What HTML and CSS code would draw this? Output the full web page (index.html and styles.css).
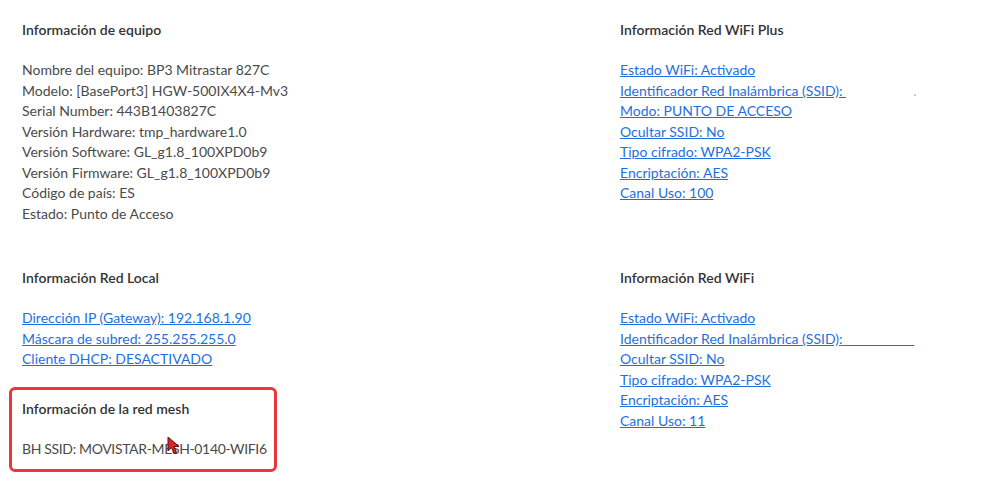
FILE: index.html
```html
<!DOCTYPE html>
<html lang="es">
<head>
<meta charset="utf-8">
<title>Información</title>
<link rel="stylesheet" href="styles.css">
</head>
<body>
<main class="page">
  <section class="section">
    <h2 class="title">Información de equipo</h2>
    <ul class="list">
      <li>Nombre del equipo: BP3 Mitrastar 827C</li>
      <li>Modelo: [BasePort3] HGW-500IX4X4-Mv3</li>
      <li>Serial Number: 443B1403827C</li>
      <li>Versión Hardware: tmp_hardware1.0</li>
      <li>Versión Software: GL_g1.8_100XPD0b9</li>
      <li>Versión Firmware: GL_g1.8_100XPD0b9</li>
      <li>Código de país: ES</li>
      <li>Estado: Punto de Acceso</li>
    </ul>
  </section>
  <section class="section">
    <h2 class="title">Información Red WiFi Plus</h2>
    <ul class="list">
      <li><a href="#">Estado WiFi: Activado</a></li>
      <li><a href="#">Identificador Red Inalámbrica (SSID): </a><span class="gap"></span><span class="dot">.</span></li>
      <li><a href="#">Modo: PUNTO DE ACCESO</a></li>
      <li><a href="#">Ocultar SSID: No</a></li>
      <li><a href="#">Tipo cifrado: WPA2-PSK</a></li>
      <li><a href="#">Encriptación: AES</a></li>
      <li><a href="#">Canal Uso: 100</a></li>
    </ul>
  </section>
  <div class="stack">
    <section class="section">
      <h2 class="title">Información Red Local</h2>
      <ul class="list">
        <li><a href="#">Dirección IP (Gateway): 192.168.1.90</a></li>
        <li><a href="#">Máscara de subred: 255.255.255.0</a></li>
        <li><a href="#">Cliente DHCP: DESACTIVADO</a></li>
      </ul>
    </section>
    <section class="section mesh">
      <h2 class="title">Información de la red mesh</h2>
      <ul class="list">
        <li class="tight">BH SSID: MOVISTAR-MESH-0140-WIFI6</li>
      </ul>
      <svg class="cursor" width="14" height="20" viewBox="0 0 14 20" aria-hidden="true">
        <path d="M1 1 L1 15 L4.5 11.5 L7 17.5 L9.5 16.5 L7 10.5 L12 10.5 Z" fill="#d8252a" stroke="#5a1010" stroke-width="1" stroke-linejoin="round"/>
      </svg>
    </section>
  </div>
  <section class="section">
    <h2 class="title">Información Red WiFi</h2>
    <ul class="list">
      <li><a href="#">Estado WiFi: Activado</a></li>
      <li><a href="#">Identificador Red Inalámbrica (SSID):<span class="blank">&nbsp;&nbsp;&nbsp;&nbsp;&nbsp;&nbsp;&nbsp;&nbsp;&nbsp;&nbsp;&nbsp;&nbsp;&nbsp;&nbsp;&nbsp;&nbsp;&nbsp;&nbsp;&nbsp;&nbsp;</span></a></li>
      <li><a href="#">Ocultar SSID: No</a></li>
      <li><a href="#">Tipo cifrado: WPA2-PSK</a></li>
      <li><a href="#">Encriptación: AES</a></li>
      <li><a href="#">Canal Uso: 11</a></li>
    </ul>
  </section>
</main>
</body>
</html>
```
FILE: styles.css
```css
* { box-sizing: border-box; }
html, body { margin: 0; padding: 0; background: #fff; }
body {
  font-family: Lato, "Noto Sans", sans-serif;
  font-size: 14px;
  color: #4a4a4a;
}
.page {
  display: grid;
  grid-template-columns: 598px 1fr;
  row-gap: 44px;
  padding: 20px 0 0 22px;
}
.section { position: relative; }
.title {
  margin: 0 0 20px;
  font-size: 14px;
  line-height: 20px;
  font-weight: 600;
  color: #333;
}
.list {
  list-style: none;
  margin: 0;
  padding: 0;
  line-height: 20.5px;
}
a { color: #1f6fe0; text-decoration: underline; }
.gap { display: inline-block; width: 67px; }
.dot { color: #9ab3d8; }
.stack { display: flex; flex-direction: column; gap: 17px; }
.mesh {
  align-self: flex-start;
  width: 268px;
  margin-left: -13px;
  padding: 9px 3px 10px 10px;
  border: 3px solid #e8383b;
  border-radius: 6px;
  white-space: nowrap;
}
.tight { letter-spacing: -0.35px; }
.cursor { position: absolute; left: 155px; top: 46px; }
```
